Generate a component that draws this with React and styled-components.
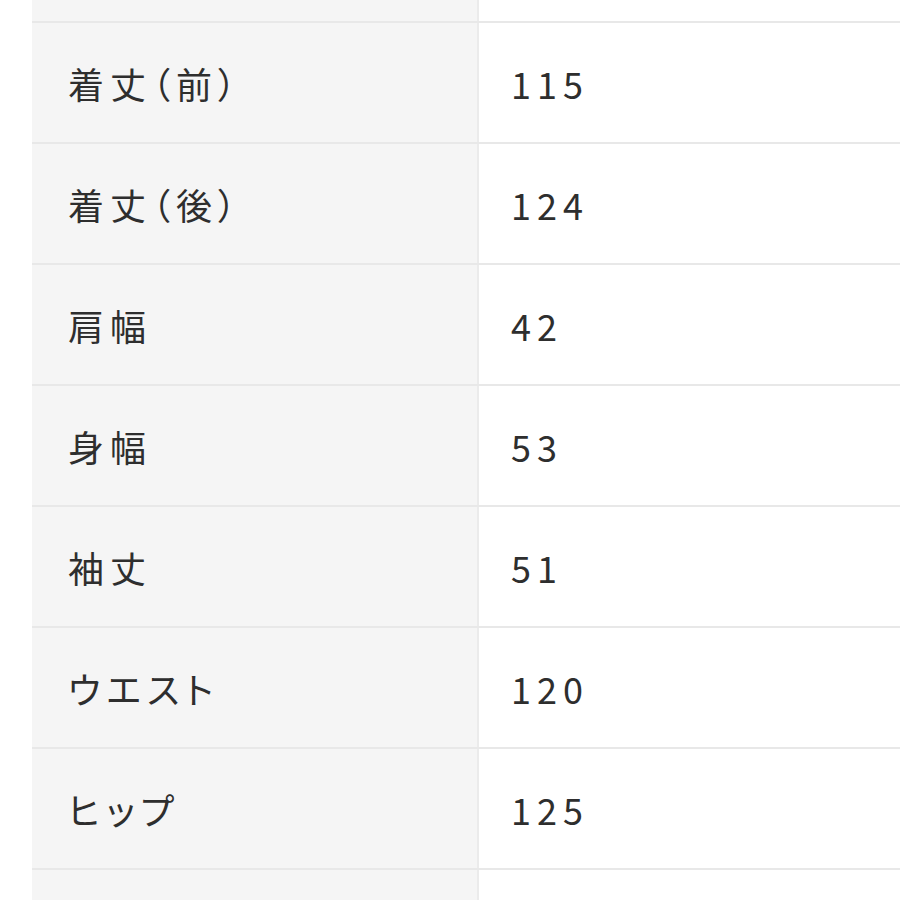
import React from "react";
import styled, { createGlobalStyle } from "styled-components";

const sizeRows = [
  { label: "", value: "" },
  { label: "着丈（前）", value: "115" },
  { label: "着丈（後）", value: "124" },
  { label: "肩幅", value: "42" },
  { label: "身幅", value: "53" },
  { label: "袖丈", value: "51" },
  { label: "ウエスト", value: "120" },
  { label: "ヒップ", value: "125" },
  { label: "", value: "" },
];

const GlobalStyle = createGlobalStyle`
  html, body {
    margin: 0;
    padding: 0;
    background: #fff;
  }
  body {
    width: 900px;
    height: 900px;
    overflow: hidden;
    font-family: "Noto Sans CJK JP", "Noto Sans", sans-serif;
    color: #333;
  }
`;

const App = () => {
  return (
    <>
      <GlobalStyle />
      <Page>
        <SizeTable>
          {sizeRows.map((row, index) => (
            <SizeRow key={index}>
              <LabelCell>{row.label}</LabelCell>
              <ValueCell>{row.value}</ValueCell>
            </SizeRow>
          ))}
        </SizeTable>
      </Page>
    </>
  );
};

const Page = styled.div`
  width: 900px;
  height: 900px;
  overflow: hidden;
  padding-left: 32px;
  box-sizing: border-box;
`;

const SizeTable = styled.div`
  display: flex;
  flex-direction: column;
  margin-top: -98px;
`;

const SizeRow = styled.div`
  display: grid;
  grid-template-columns: 447px 1fr;
  height: 121px;
  box-sizing: border-box;
  border-bottom: 2px solid #e8e8e8;
`;

const LabelCell = styled.div`
  display: flex;
  align-items: center;
  background: #f5f5f5;
  border-right: 2px solid #ebebeb;
  padding-left: 36px;
  font-size: 36px;
  letter-spacing: 6px;
  font-feature-settings: "palt";
  color: #2e2e2e;
`;

const ValueCell = styled.div`
  display: flex;
  align-items: center;
  background: #fff;
  padding-left: 32px;
  font-size: 36px;
  letter-spacing: 6px;
  color: #2e2e2e;
`;

export default App;
